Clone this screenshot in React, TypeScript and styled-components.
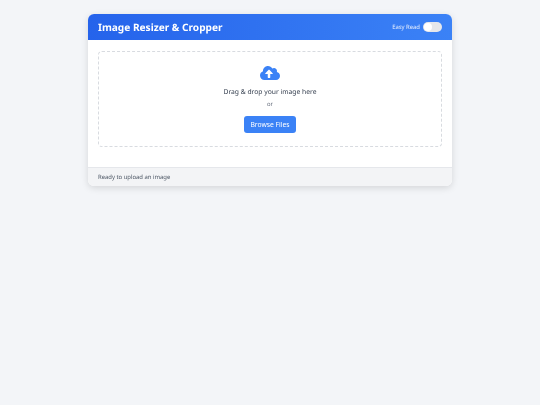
import React from 'react';
import styled, { createGlobalStyle } from 'styled-components';
import { FaCloudUploadAlt } from 'react-icons/fa';

const GlobalStyle = createGlobalStyle`
    html, body {
        margin: 0;
        padding: 0;
        background-color: #f3f5f8;
        font-family: "Noto Sans", sans-serif;
        text-rendering: geometricPrecision;
    }
`;
const Page = styled.div`
    width: 540px;
    height: 405px;
    padding-top: 14px;
    box-sizing: border-box;
    overflow: hidden;
`;
const Card = styled.div`
    width: 364px;
    margin: 0 auto;
    background-color: #fff;
    border-radius: 6px;
    box-shadow: 0 2px 7px rgba(0, 0, 0, 0.13);
    overflow: hidden;
    will-change: transform;
`;
const Header = styled.div`
    height: 26px;
    padding: 0 10px;
    display: flex;
    align-items: center;
    justify-content: space-between;
    background: linear-gradient(90deg, #2563eb, #3b82f6);
    color: #fff;
`;
const Title = styled.h1`
    margin: 0;
    font-size: 10.125px;
    line-height: 14px;
    font-weight: 700;
`;
const ToggleRow = styled.div`
    display: flex;
    align-items: center;
    gap: 3px;
    font-size: 5.9px;
    line-height: 10px;
    color: #e8effd;
`;
const Track = styled.div`
    width: 19px;
    height: 10px;
    border-radius: 5px;
    background-color: #e5e7eb;
    display: flex;
    align-items: center;
    padding: 1px;
    box-sizing: border-box;
`;
const Knob = styled.div`
    width: 8px;
    height: 8px;
    border-radius: 50%;
    background-color: #fff;
`;
const Body = styled.div`
    padding: 11px 10px 20px;
`;
const DropZone = styled.div`
    height: 96px;
    box-sizing: border-box;
    border: 1px dashed #d8dbe0;
    border-radius: 4px;
    display: flex;
    flex-direction: column;
    align-items: center;
    padding-top: 13px;
`;
const CloudIcon = styled(FaCloudUploadAlt)`
    width: 20px;
    height: 16px;
    color: #3b82f6;
`;
const DropText = styled.p`
    margin: 5px 0 0;
    font-size: 6.75px;
    line-height: 12px;
    color: #374151;
`;
const OrText = styled.p`
    margin: 1px 0 0;
    font-size: 5.9px;
    line-height: 10px;
    color: #6b7280;
`;
const BrowseButton = styled.button`
    margin-top: 7px;
    width: 52px;
    height: 17px;
    padding: 0;
    border: none;
    border-radius: 3px;
    background-color: #3b82f6;
    color: #fff;
    font-family: inherit;
    font-size: 6.75px;
    line-height: 12px;
`;
const StatusBar = styled.div`
    height: 18px;
    padding: 0 10px;
    display: flex;
    align-items: center;
    background-color: #f3f4f6;
    border-top: 1px solid #e5e7eb;
    font-size: 5.9px;
    color: #4b5563;
`;

function App() {
    return (
        <Page>
            <GlobalStyle />
            <Card>
                <Header>
                    <Title>Image Resizer &amp; Cropper</Title>
                    <ToggleRow>
                        <span>Easy Read</span>
                        <Track>
                            <Knob />
                        </Track>
                    </ToggleRow>
                </Header>
                <Body>
                    <DropZone>
                        <CloudIcon />
                        <DropText>Drag &amp; drop your image here</DropText>
                        <OrText>or</OrText>
                        <BrowseButton>Browse Files</BrowseButton>
                    </DropZone>
                </Body>
                <StatusBar>Ready to upload an image</StatusBar>
            </Card>
        </Page>
    );
}

export default App;
